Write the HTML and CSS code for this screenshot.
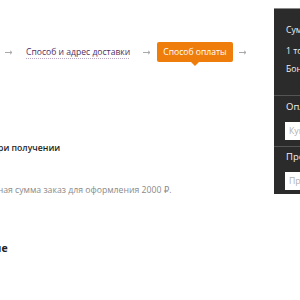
FILE: index.html
```html
<!DOCTYPE html>
<html lang="ru">
<head>
<meta charset="utf-8">
<link rel="stylesheet" href="styles.css">
</head>
<body>
<div class="page">
  <main class="main">
    <nav class="steps">
      <svg class="arrow" width="8" height="5" viewBox="0 0 8 5"><path d="M0 2.5H7M5 0.8L7 2.5 5 4.2" fill="none" stroke="#a9a9a9" stroke-width="1"/></svg>
      <a class="step step-link" href="#">Способ и адрес доставки</a>
      <svg class="arrow" width="8" height="5" viewBox="0 0 8 5"><path d="M0 2.5H7M5 0.8L7 2.5 5 4.2" fill="none" stroke="#a9a9a9" stroke-width="1"/></svg>
      <span class="step step-active">Способ оплаты</span>
      <svg class="arrow" width="8" height="5" viewBox="0 0 8 5"><path d="M0 2.5H7M5 0.8L7 2.5 5 4.2" fill="none" stroke="#a9a9a9" stroke-width="1"/></svg>
    </nav>
    <div class="option">Оплата при получении</div>
    <p class="note">Минимальная сумма заказ для оформления 2000 ₽.</p>
    <div class="section-title">Подтверждение</div>
  </main>
  <aside class="sidebar">
    <div class="sb-block sb-summary">
      <div class="sb-row sb-first">Сумма заказа</div>
      <div class="sb-row">1 товар на сумму</div>
      <div class="sb-row">Бонусы за заказ</div>
    </div>
    <div class="sb-block sb-form">
      <div class="sb-title">Оплата бонусами</div>
      <input class="sb-input" type="text" placeholder="Купон">
    </div>
    <div class="sb-block sb-form sb-last">
      <div class="sb-title">Промокод</div>
      <input class="sb-input" type="text" placeholder="Промокод">
    </div>
  </aside>
</div>
</body>
</html>
```
FILE: styles.css
```css
html, body {
  margin: 0;
  padding: 0;
  background: #fff;
  overflow: hidden;
  width: 300px;
  height: 300px;
}
body {
  font-family: "Open Sans", "DejaVu Sans", sans-serif;
  font-size: 8.7px;
  color: #222;
}
.page {
  display: flex;
  align-items: flex-start;
  width: 520px;
}
.main {
  width: 274px;
  flex: none;
  overflow: hidden;
}
.steps {
  display: flex;
  align-items: center;
  gap: 6px;
  margin: 42px 0 0 5px;
  height: 20px;
  white-space: nowrap;
  font-size: 8.6px;
}
.arrow {
  flex: none;
  display: block;
}
.step {
  display: block;
  padding: 0 7px;
  line-height: 20px;
  height: 20px;
  flex: none;
}
.step-link {
  color: #4f2f63;
  text-decoration: underline dotted #b9a8c4;
  text-underline-offset: 3px;
}
.step-active {
  position: relative;
  background: #ef7d0b;
  color: #fff;
  border-radius: 2px;
  padding: 0 6px;
}
.step-active::after {
  content: "";
  position: absolute;
  left: 50%;
  bottom: -4px;
  margin-left: -4px;
  border-left: 4px solid transparent;
  border-right: 4px solid transparent;
  border-top: 4px solid #ef7d0b;
}
.option {
  margin: 77px 0 0 -42px;
  font-weight: 600;
  line-height: 18px;
  color: #1f1f1f;
  white-space: nowrap;
}
.note {
  margin: 24px 0 0 -48px;
  line-height: 18px;
  color: #8a8a8a;
  white-space: nowrap;
}
.section-title {
  margin: 40px 0 0 -82px;
  font-weight: 700;
  font-size: 10.5px;
  line-height: 18px;
  white-space: nowrap;
  color: #222;
}
.sidebar {
  width: 220px;
  flex: none;
  margin-top: 8px;
  background: #2b2b2b;
  border-top: 1px solid #8a8a8a;
  color: #f0f0f0;
}
.sb-block {
  padding: 0 12px;
}
.sb-summary {
  padding-top: 12px;
  padding-bottom: 17px;
}
.sb-row {
  line-height: 18px;
}
.sb-first {
  margin-bottom: 3px;
}
.sb-form {
  border-top: 1px solid #555;
  padding-top: 2px;
  padding-bottom: 6px;
  padding-left: 11px;
}
.sb-last {
  padding-top: 1px;
  padding-bottom: 4px;
}
.sb-title {
  line-height: 18px;
  padding-left: 1px;
  font-size: 9.5px;
}
.sb-input {
  display: block;
  box-sizing: border-box;
  width: 190px;
  height: 18px;
  margin-top: 6px;
  border: 0;
  padding: 0 4px;
  font-family: inherit;
  font-size: 8.7px;
  background: #fff;
  color: #222;
}
.sb-input::placeholder {
  color: #b0b0b0;
}
```
